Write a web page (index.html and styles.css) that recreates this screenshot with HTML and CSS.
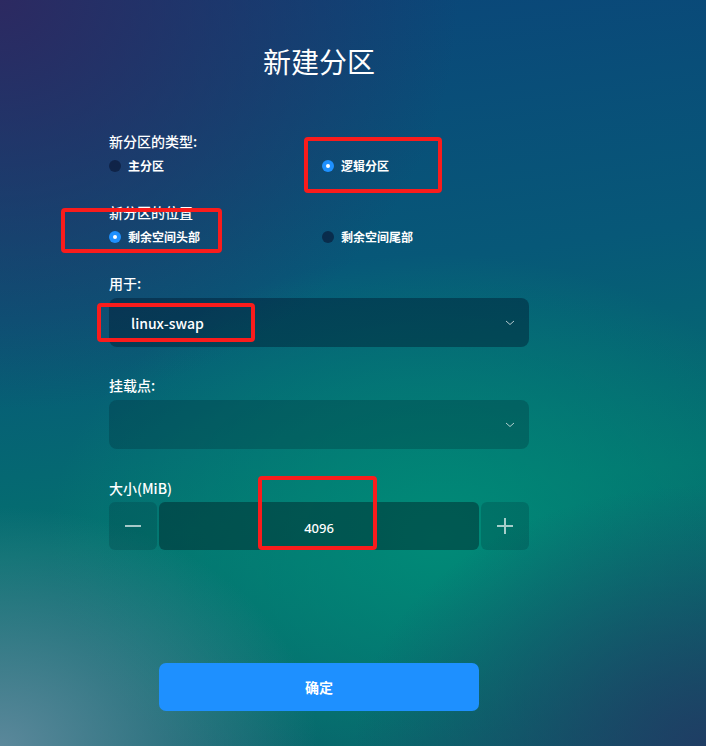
FILE: index.html
```html
<!DOCTYPE html>
<html lang="zh-CN">
<head>
    <meta charset="UTF-8">
    <meta name="viewport" content="width=device-width, initial-scale=1.0">
    <title>新建分区</title>
    <link rel="stylesheet" href="styles.css">
</head>
<body>
    <div class="dialog">
        <h1 class="title">新建分区</h1>

        <div class="label first">新分区的类型:</div>
        <div class="radio-row">
            <label class="radio"><span class="dot"></span>主分区</label>
            <label class="radio"><span class="dot checked"></span>逻辑分区</label>
        </div>

        <div class="label">新分区的位置</div>
        <div class="radio-row">
            <label class="radio"><span class="dot checked"></span>剩余空间头部</label>
            <label class="radio"><span class="dot"></span>剩余空间尾部</label>
        </div>

        <div class="label">用于:</div>
        <div class="select active">
            <span class="select-text">linux-swap</span>
            <svg class="chevron" viewBox="0 0 10 6"><path d="M1 1L5 4.5L9 1"></path></svg>
        </div>

        <div class="label wide">挂载点:</div>
        <div class="select">
            <span class="select-text"></span>
            <svg class="chevron" viewBox="0 0 10 6"><path d="M1 1L5 4.5L9 1"></path></svg>
        </div>

        <div class="label wider">大小(MiB)</div>
        <div class="spinner">
            <button class="step">
                <svg viewBox="0 0 16 16"><path d="M0 8H16"></path></svg>
            </button>
            <div class="value">4096</div>
            <button class="step">
                <svg viewBox="0 0 16 16"><path d="M0 8H16M8 0V16"></path></svg>
            </button>
        </div>

        <div class="actions">
            <button class="ok-btn">确定</button>
        </div>
    </div>

    <!-- annotation boxes drawn over the dialog -->
    <div class="mark mark-type"></div>
    <div class="mark mark-pos"></div>
    <div class="mark mark-use"></div>
    <div class="mark mark-size"></div>
</body>
</html>
```

FILE: styles.css
```css
body {
    margin: 0;
    width: 706px;
    height: 746px;
    overflow: hidden;
    position: relative;
    font-family: 'Noto Sans CJK SC', 'Noto Sans', sans-serif;
    color: #ffffff;
    background:
        radial-gradient(ellipse 45% 32% at 0% 100%, rgba(100, 140, 160, 0.9), rgba(100, 140, 160, 0) 100%),
        radial-gradient(ellipse 50% 35% at 100% 100%, rgba(32, 60, 100, 0.95), rgba(32, 60, 100, 0) 100%),
        radial-gradient(ellipse 55% 38% at 62% 72%, rgba(0, 140, 120, 0.95), rgba(0, 140, 120, 0) 100%),
        radial-gradient(ellipse 65% 55% at 0% 0%, rgba(46, 40, 96, 0.95), rgba(46, 40, 96, 0) 100%),
        linear-gradient(172deg, #0b4479 0%, #075878 38%, #04706f 66%, #0a5c68 100%);
}
.dialog {
    width: 420px;
    padding: 41px 0 0 109px;
}
.title {
    margin: 0;
    width: 420px;
    text-align: center;
    font-size: 28px;
    line-height: 40px;
    font-weight: 400;
}
.label {
    font-size: 14px;
    line-height: 20px;
    font-weight: 500;
    margin-top: 26px;
}
.label.first {
    margin-top: 50px;
}
.label.wide {
    margin-top: 28px;
}
.label.wider {
    margin-top: 29px;
}
.radio-row {
    display: grid;
    grid-template-columns: 213px 1fr;
    margin-top: 5px;
}
.radio {
    display: flex;
    align-items: center;
    gap: 7px;
    font-size: 12px;
    line-height: 20px;
    font-weight: 700;
}
.dot {
    width: 12px;
    height: 12px;
    border-radius: 50%;
    background-color: rgba(8, 20, 48, 0.6);
    display: flex;
    align-items: center;
    justify-content: center;
}
.dot.checked {
    background-color: #1e90ff;
}
.dot.checked::after {
    content: '';
    width: 4px;
    height: 4px;
    border-radius: 50%;
    background-color: #ffffff;
}
.select {
    margin-top: 5px;
    height: 49px;
    border-radius: 8px;
    background-color: rgba(0, 30, 45, 0.25);
    display: flex;
    align-items: center;
    justify-content: space-between;
    padding: 0 14px 0 22px;
}
.select.active {
    background-color: rgba(0, 22, 42, 0.42);
}
.select-text {
    font-size: 14px;
    font-weight: 500;
}
.chevron {
    width: 10px;
    height: 6px;
    fill: none;
    stroke: rgba(255, 255, 255, 0.7);
    stroke-width: 1;
}
.spinner {
    margin-top: 4px;
    display: flex;
    gap: 2px;
    height: 48px;
}
.step {
    width: 48px;
    border: none;
    border-radius: 6px;
    background-color: rgba(0, 35, 45, 0.2);
    display: flex;
    align-items: center;
    justify-content: center;
    padding: 0;
}
.step svg {
    width: 16px;
    height: 16px;
    fill: none;
    stroke: rgba(255, 255, 255, 0.65);
    stroke-width: 2;
}
.value {
    flex: 1;
    border-radius: 6px;
    background-color: rgba(0, 25, 30, 0.42);
    display: flex;
    align-items: center;
    justify-content: center;
    font-family: 'Noto Sans', sans-serif;
    font-size: 13px;
    font-weight: 500;
    padding-top: 3px;
}
.actions {
    display: flex;
    justify-content: center;
    margin-top: 113px;
}
.ok-btn {
    width: 320px;
    height: 48px;
    border: none;
    border-radius: 7px;
    background-color: #1e90ff;
    color: #ffffff;
    font-family: 'Noto Sans CJK SC', sans-serif;
    font-size: 14px;
    font-weight: 700;
}
.mark {
    position: absolute;
    border: 4px solid #fa1c1c;
    border-radius: 4px;
    box-sizing: border-box;
}
.mark-type {
    left: 304px;
    top: 137px;
    width: 138px;
    height: 56px;
}
.mark-pos {
    left: 61px;
    top: 208px;
    width: 161px;
    height: 45px;
}
.mark-use {
    left: 97px;
    top: 303px;
    width: 158px;
    height: 39px;
}
.mark-size {
    left: 258px;
    top: 476px;
    width: 119px;
    height: 74px;
}
```
